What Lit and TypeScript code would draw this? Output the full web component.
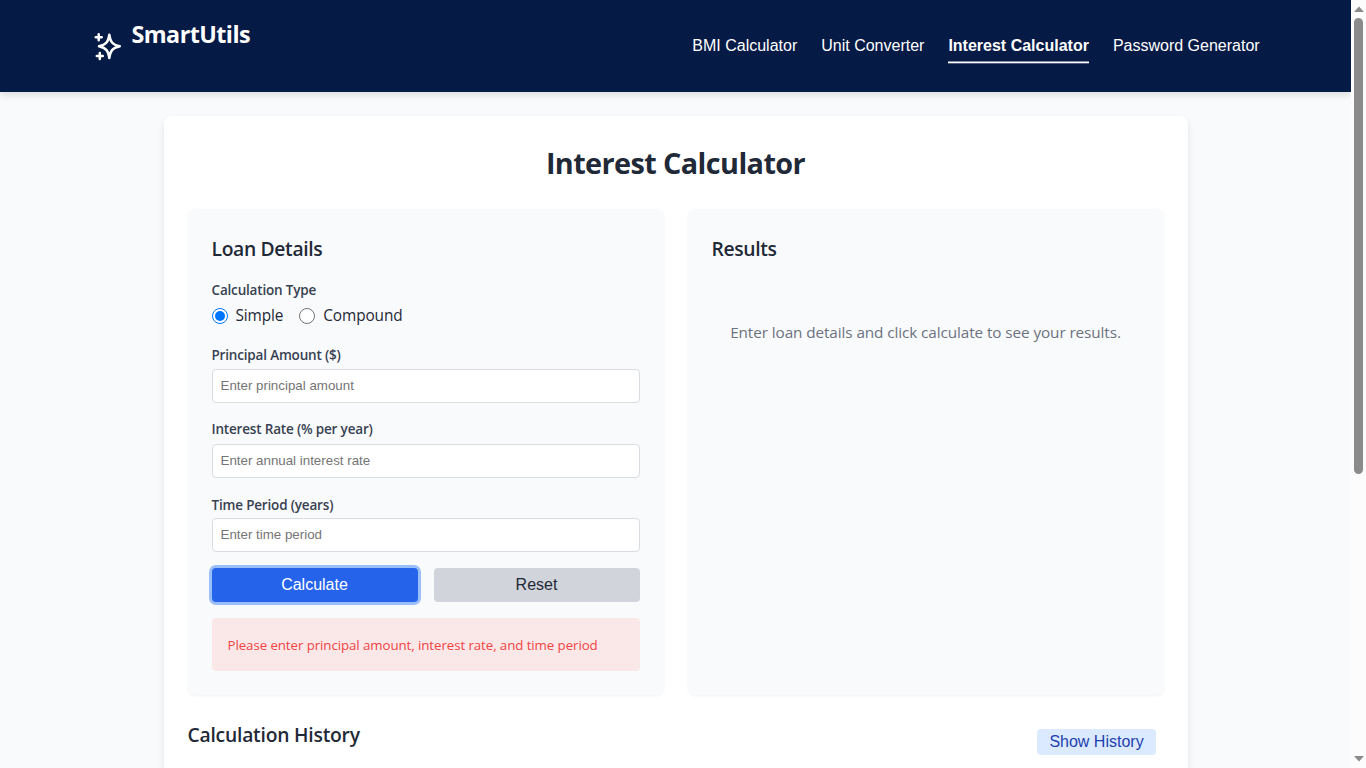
import { LitElement, html, css } from "lit";
import { customElement } from "lit/decorators.js";

@customElement("app-root")
export class AppRoot extends LitElement {
  static styles = css`
    :host { display: flex; width: 100%; height: 768px; overflow: hidden; font-family: "Open Sans", "Noto Sans", sans-serif; color: #1f2937; }
    * { box-sizing: border-box; margin: 0; }
    .page { flex: 1; min-width: 0; height: 768px; overflow: hidden; background: #f9fafb; display: flex; flex-direction: column; align-items: center; }
    header { flex: none; width: 100%; height: 92px; padding: 0 91px 0 92px; background: #061a46; display: flex; justify-content: space-between; box-shadow: 0 4px 6px rgba(0,0,0,.1); }
    .brand { display: flex; color: #fff; }
    .logo { width: 32px; height: 32px; margin-top: 30px; }
    .name { font-size: 23.3px; line-height: 32px; font-weight: 700; padding: 18px 0 0 7.500px; letter-spacing: -0.55px; }
    nav { display: flex; gap: 24px; padding-top: 34px; margin-right: .4px; font: 16px/24px "Liberation Sans", Arial, sans-serif; }
    nav a { color: #fff; height: 30px; white-space: nowrap; }
    nav .on { font-weight: 700; background: linear-gradient(rgba(255,255,255,.5) 0 1px, #fff 1px 2px, rgba(255,255,255,.3) 2px 3px) 0 100% / 100% 3px no-repeat; }
    .card { flex: none; width: 1024px; height: 760px; margin-top: 24px; padding: 24px; background: #fff; border-radius: 8px; box-shadow: 0 4px 6px rgba(0,0,0,.1); }
    h1 { font-size: 28.8px; line-height: 45px; height: 45px; font-weight: 700; text-align: center; white-space: nowrap; letter-spacing: -.58px; }
    .cols { display: grid; grid-template-columns: 1fr 1fr; gap: 24px; margin-top: 24px; }
    .panel { height: 486px; padding: 24px; background: #f9fafb; border-radius: 8px; box-shadow: 0 1px 3px rgba(0,0,0,.05); }
    h2 { font-size: 19.3px; line-height: 30px; height: 30px; padding-top: 1px; font-weight: 600; white-space: nowrap; letter-spacing: -.33px; }
    .label { display: block; font-size: 13.5px; line-height: 21px; font-weight: 600; color: #374151; letter-spacing: -.18px; white-space: nowrap; }
    .type { margin-top: 17px; }
    .radios { display: flex; gap: 16px; height: 30px; align-items: center; }
    .radios label { display: flex; align-items: center; font-size: 15.4px; line-height: 24px; letter-spacing: -.12px; }
    .dot { width: 16px; height: 16px; margin-right: 8px; }
    .field { margin-top: 14px; }
    .field input { display: block; width: 100%; height: 34px; margin-top: 3px; padding: 0 8px 2px; border: 1px solid #d9dce2; border-radius: 4px; background: #fff; font: 13.333px "Liberation Sans", Arial, sans-serif; }
    .field input::placeholder { color: #757575; }
    .rate { margin-top: 16px; }
    .rate input { margin-top: 4px; }
    .period { margin-top: 17px; }
    .period input { margin-top: 2px; }
    .buttons { display: grid; grid-template-columns: 1fr 1fr; gap: 16px; margin-top: 16px; }
    button { border: 0; border-radius: 4px; font: 16px/24px "Liberation Sans", Arial, sans-serif; padding: 0; }
    .calc { height: 34px; background: #2563eb; color: #fff; box-shadow: 0 0 0 3px rgba(59,130,246,.5); }
    .reset { height: 34px; background: #d1d5db; color: #1f2937; }
    .error { margin-top: 16px; height: 53px; padding: 17px 16px 15px; border-radius: 4px; background: #fae8e8; color: #ef4444; font-size: 13.3px; line-height: 21px; white-space: nowrap; letter-spacing: -.08px; }
    .empty { margin-top: 57px; text-align: center; font-size: 15.3px; line-height: 24px; color: #6b7280; white-space: nowrap; letter-spacing: -.09px; }
    .history { display: flex; justify-content: space-between; margin-top: 24px; padding-right: 8px; }
    .history h2 { letter-spacing: -.22px; }
    .show { width: 119px; height: 26px; margin-top: 10px; padding-left: 1px; background: #dbeafe; color: #1e40af; }
    .bar { flex: none; width: 15px; height: 768px; background: #fcfcfc; display: block; }
  `;

  private fields = [
    ["Principal Amount ($)", "Enter principal amount", "principal"],
    ["Interest Rate (% per year)", "Enter annual interest rate", "rate"],
    ["Time Period (years)", "Enter time period", "period"],
  ];

  render() {
    return html`
      <div class="page">
        <header>
          <div class="brand">
            <svg class="logo" viewBox="0 0 32 32" fill="none" stroke="#fff" stroke-width="2.5" stroke-linecap="round" stroke-linejoin="round">
              <path d="M17.3 4.700 C18.5 12 20 14.5 27.8 16.3 C20 18.3 18.5 20.5 17.3 28 C16.1 20.5 14.5 18.3 7 16.3 C14.5 14.5 16.1 12 17.3 4.700Z" />
              <path d="M6.7 4.2v6M3.7 7.2h6M7.8 23v6M4.8 26h6" />
            </svg>
            <div class="name">SmartUtils</div>
          </div>
          <nav><a>BMI Calculator</a><a>Unit Converter</a><a class="on">Interest Calculator</a><a>Password Generator</a></nav>
        </header>
        <main class="card">
          <h1>Interest Calculator</h1>
          <div class="cols">
            <section class="panel">
              <h2>Loan Details</h2>
              <div class="type">
                <span class="label">Calculation Type</span>
                <div class="radios">
                  <label><svg class="dot" viewBox="0 0 16 16"><circle cx="8" cy="8" r="7.5" fill="#fff" stroke="#0075ff" /><circle cx="8" cy="8" r="5" fill="#0075ff" /></svg><span>Simple</span></label>
                  <label><svg class="dot" viewBox="0 0 16 16"><circle cx="8" cy="8" r="7.5" fill="#fff" stroke="#767676" /></svg><span>Compound</span></label>
                </div>
              </div>
              ${this.fields.map(([label, hint, key]) => html`<div class="field ${key}"><span class="label">${label}</span><input placeholder=${hint} /></div>`)}
              <div class="buttons"><button class="calc">Calculate</button><button class="reset">Reset</button></div>
              <div class="error">Please enter principal amount, interest rate, and time period</div>
            </section>
            <section class="panel">
              <h2>Results</h2>
              <div class="empty">Enter loan details and click calculate to see your results.</div>
            </section>
          </div>
          <div class="history"><h2>Calculation History</h2><button class="show">Show History</button></div>
        </main>
      </div>
      <svg class="bar" viewBox="0 0 15 768"><path d="M3 12h10L8 6.5zM3 756h10l-5 5.500z" fill="#8b8b8b" /><rect x="3" y="18" width="9" height="456" rx="4.500" fill="#8b8b8b" /></svg>
    `;
  }
}
